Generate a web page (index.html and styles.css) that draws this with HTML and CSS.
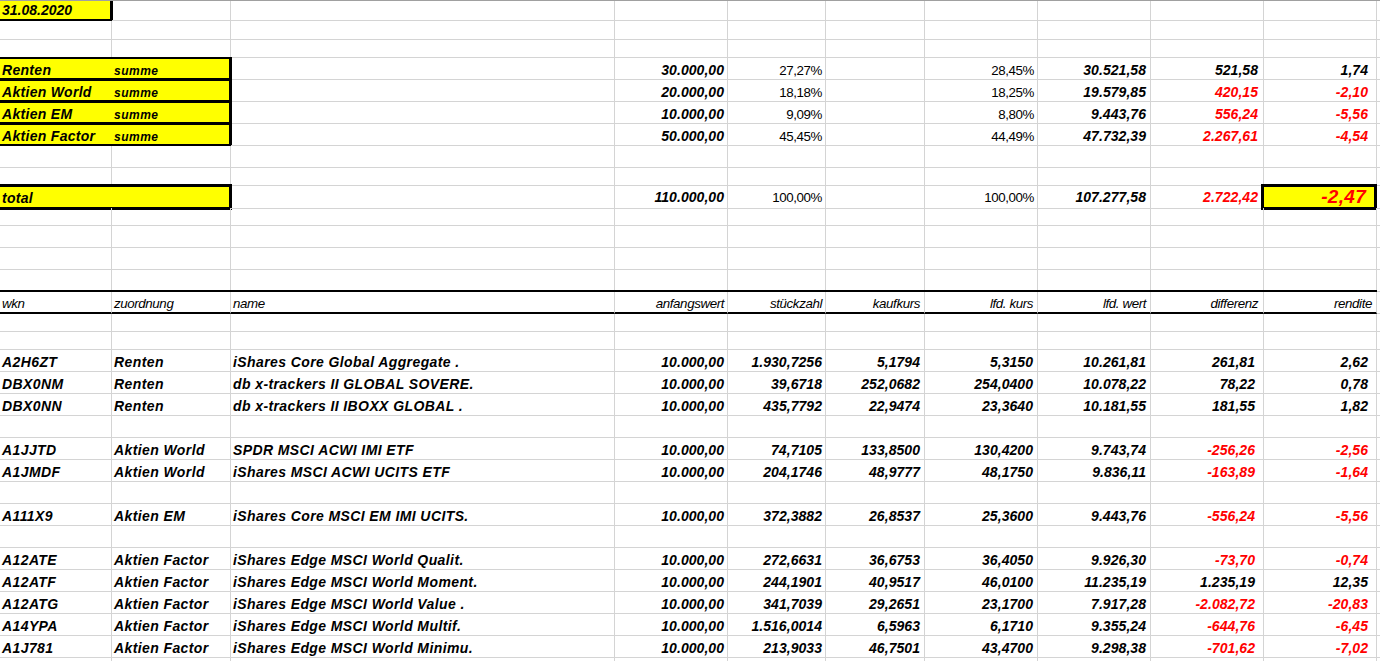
FILE: index.html
```html
<!DOCTYPE html>
<html lang="de">
<head>
<meta charset="utf-8">
<title>Depot 31.08.2020</title>
<link rel="stylesheet" href="styles.css">
</head>
<body>
<div class="sheet">
  <div class="row h20"><div class="date">31.08.2020</div><div></div><div></div><div></div><div></div><div></div><div></div><div></div><div></div><div></div><div></div></div>
  <div class="row h19"><div></div><div></div><div></div><div></div><div></div><div></div><div></div><div></div><div></div><div></div><div></div></div>
  <div class="row h18"><div></div><div></div><div></div><div></div><div></div><div></div><div></div><div></div><div></div><div></div><div></div></div>

  <div class="row sum"><div class="box"><p class="lbl"><span class="cat">Renten</span><span class="sm">summe</span></p></div><div></div><div class="b">30.000,00</div><div>27,27%</div><div></div><div>28,45%</div><div class="b">30.521,58</div><div class="b">521,58</div><div class="b">1,74</div><div></div></div>
  <div class="row sum"><div class="box"><p class="lbl"><span class="cat">Aktien World</span><span class="sm">summe</span></p></div><div></div><div class="b">20.000,00</div><div>18,18%</div><div></div><div>18,25%</div><div class="b">19.579,85</div><div class="b red">420,15</div><div class="b red">-2,10</div><div></div></div>
  <div class="row sum"><div class="box"><p class="lbl"><span class="cat">Aktien EM</span><span class="sm">summe</span></p></div><div></div><div class="b">10.000,00</div><div>9,09%</div><div></div><div>8,80%</div><div class="b">9.443,76</div><div class="b red">556,24</div><div class="b red">-5,56</div><div></div></div>
  <div class="row sum"><div class="box"><p class="lbl"><span class="cat">Aktien Factor</span><span class="sm">summe</span></p></div><div></div><div class="b">50.000,00</div><div>45,45%</div><div></div><div>44,49%</div><div class="b">47.732,39</div><div class="b red">2.267,61</div><div class="b red">-4,54</div><div></div></div>

  <div class="row"><div></div><div></div><div></div><div></div><div></div><div></div><div></div><div></div><div></div><div></div><div></div></div>
  <div class="row h18"><div></div><div></div><div></div><div></div><div></div><div></div><div></div><div></div><div></div><div></div><div></div></div>

  <div class="row sum tot"><div class="box"><p class="lbl"><span class="cat">total</span></p></div><div></div><div class="b">110.000,00</div><div>100,00%</div><div></div><div>100,00%</div><div class="b">107.277,58</div><div class="b red">2.722,42</div><div class="rbox">-2,47</div><div></div></div>

  <div class="row h18"><div></div><div></div><div></div><div></div><div></div><div></div><div></div><div></div><div></div><div></div><div></div></div>
  <div class="row"><div></div><div></div><div></div><div></div><div></div><div></div><div></div><div></div><div></div><div></div><div></div></div>
  <div class="row"><div></div><div></div><div></div><div></div><div></div><div></div><div></div><div></div><div></div><div></div><div></div></div>
  <div class="row"><div></div><div></div><div></div><div></div><div></div><div></div><div></div><div></div><div></div><div></div><div></div></div>

  <div class="row hdr"><div>wkn</div><div>zuordnung</div><div>name</div><div>anfangswert</div><div>stückzahl</div><div>kaufkurs</div><div>lfd. kurs</div><div>lfd. wert</div><div>differenz</div><div>rendite</div><div></div></div>

  <div class="row h18"><div></div><div></div><div></div><div></div><div></div><div></div><div></div><div></div><div></div><div></div><div></div></div>
  <div class="row h18"><div></div><div></div><div></div><div></div><div></div><div></div><div></div><div></div><div></div><div></div><div></div></div>

  <div class="row data"><div>A2H6ZT</div><div>Renten</div><div>iShares Core Global Aggregate .</div><div>10.000,00</div><div>1.930,7256</div><div>5,1794</div><div>5,3150</div><div>10.261,81</div><div>261,81</div><div>2,62</div><div></div></div>
  <div class="row data"><div>DBX0NM</div><div>Renten</div><div>db x-trackers II GLOBAL SOVERE.</div><div>10.000,00</div><div>39,6718</div><div>252,0682</div><div>254,0400</div><div>10.078,22</div><div>78,22</div><div>0,78</div><div></div></div>
  <div class="row data"><div>DBX0NN</div><div>Renten</div><div>db x-trackers II IBOXX GLOBAL .</div><div>10.000,00</div><div>435,7792</div><div>22,9474</div><div>23,3640</div><div>10.181,55</div><div>181,55</div><div>1,82</div><div></div></div>
  <div class="row"><div></div><div></div><div></div><div></div><div></div><div></div><div></div><div></div><div></div><div></div><div></div></div>
  <div class="row data"><div>A1JJTD</div><div>Aktien World</div><div>SPDR MSCI ACWI IMI ETF</div><div>10.000,00</div><div>74,7105</div><div>133,8500</div><div>130,4200</div><div>9.743,74</div><div class="red">-256,26</div><div class="red">-2,56</div><div></div></div>
  <div class="row data"><div>A1JMDF</div><div>Aktien World</div><div>iShares MSCI ACWI UCITS ETF</div><div>10.000,00</div><div>204,1746</div><div>48,9777</div><div>48,1750</div><div>9.836,11</div><div class="red">-163,89</div><div class="red">-1,64</div><div></div></div>
  <div class="row"><div></div><div></div><div></div><div></div><div></div><div></div><div></div><div></div><div></div><div></div><div></div></div>
  <div class="row data"><div>A111X9</div><div>Aktien EM</div><div>iShares Core MSCI EM IMI UCITS.</div><div>10.000,00</div><div>372,3882</div><div>26,8537</div><div>25,3600</div><div>9.443,76</div><div class="red">-556,24</div><div class="red">-5,56</div><div></div></div>
  <div class="row"><div></div><div></div><div></div><div></div><div></div><div></div><div></div><div></div><div></div><div></div><div></div></div>
  <div class="row data"><div>A12ATE</div><div>Aktien Factor</div><div>iShares Edge MSCI World Qualit.</div><div>10.000,00</div><div>272,6631</div><div>36,6753</div><div>36,4050</div><div>9.926,30</div><div class="red">-73,70</div><div class="red">-0,74</div><div></div></div>
  <div class="row data"><div>A12ATF</div><div>Aktien Factor</div><div>iShares Edge MSCI World Moment.</div><div>10.000,00</div><div>244,1901</div><div>40,9517</div><div>46,0100</div><div>11.235,19</div><div>1.235,19</div><div>12,35</div><div></div></div>
  <div class="row data"><div>A12ATG</div><div>Aktien Factor</div><div>iShares Edge MSCI World Value .</div><div>10.000,00</div><div>341,7039</div><div>29,2651</div><div>23,1700</div><div>7.917,28</div><div class="red">-2.082,72</div><div class="red">-20,83</div><div></div></div>
  <div class="row data"><div>A14YPA</div><div>Aktien Factor</div><div>iShares Edge MSCI World Multif.</div><div>10.000,00</div><div>1.516,0014</div><div>6,5963</div><div>6,1710</div><div>9.355,24</div><div class="red">-644,76</div><div class="red">-6,45</div><div></div></div>
  <div class="row data"><div>A1J781</div><div>Aktien Factor</div><div>iShares Edge MSCI World Minimu.</div><div>10.000,00</div><div>213,9033</div><div>46,7501</div><div>43,4700</div><div>9.298,38</div><div class="red">-701,62</div><div class="red">-7,02</div><div></div></div>
  <div class="row"><div></div><div></div><div></div><div></div><div></div><div></div><div></div><div></div><div></div><div></div><div></div></div>
</div>
</body>
</html>
```

FILE: styles.css
```css
html, body {
  margin: 0;
  padding: 0;
  background: #ffffff;
  overflow: hidden;
}

.sheet {
  border-top: 1px solid #a0a0a0;
  font-family: "Liberation Sans", Arial, sans-serif;
  font-size: 13.33px;
  color: #000000;
  letter-spacing: -0.4px;
}

.row {
  display: grid;
  grid-template-columns: 112px 119px 384px 113px 98px 99px 113px 113px 113px 113px 1fr;
  height: 22px;
}

.h20 { height: 20px; }
.h19 { height: 19px; }
.h18 { height: 18px; }

.row > div {
  box-sizing: border-box;
  border-right: 1px solid #d4d4d4;
  border-bottom: 1px solid #d4d4d4;
  display: flex;
  align-items: flex-end;
  padding: 0 3px 0 2px;
  line-height: 15px;
  white-space: nowrap;
  min-width: 0;
}

.b {
  font-weight: bold;
  font-style: italic;
  font-size: 14px;
  letter-spacing: 0.05px;
}

.red { color: #ff0000; }

/* date cell */
.row > .date {
  background: #ffff00;
  font-weight: bold;
  font-style: italic;
  font-size: 14px;
  letter-spacing: 0;
  padding-bottom: 1px;
  border-right: 2px solid #000000;
  border-bottom: 2px solid #000000;
  box-shadow: 1px 0 0 #000000;
}

/* yellow summary boxes spanning columns A and B */
.row > .box {
  grid-column: span 2;
  padding: 0;
  background: #ffff00;
  border-top: 1px solid #000000;
  border-right: 2px solid #000000;
  border-bottom: 2px solid #000000;
  box-shadow: 0 -1px 0 #000000, 1px 0 0 #000000, 1px -1px 0 #000000;
}

.lbl {
  margin: 0;
  line-height: 15px;
  font-weight: bold;
  font-style: italic;
}

.lbl > .cat {
  display: inline-block;
  width: 112px;
  padding-left: 2px;
  font-size: 14px;
  letter-spacing: 0.3px;
}

.lbl > .sm {
  font-size: 12px;
  line-height: 14px;
  letter-spacing: 0.5px;
}

.sum > div { padding-bottom: 1px; }

.tot > div { padding-bottom: 3px; }

.row > .tot-x { padding-bottom: 1px; }

.tot > .box {
  padding-bottom: 1px;
  box-shadow: 0 -2px 0 #000000, 1px 0 0 #000000, 1px -2px 0 #000000, 0 1px 0 #000000, 1px 1px 0 #000000;
}

.row > .rbox {
  justify-content: flex-end;
  background: #ffff00;
  color: #ff0000;
  font-weight: bold;
  font-style: italic;
  font-size: 19px;
  letter-spacing: 0.3px;
  line-height: 20px;
  padding: 0 9px 0 0;
  border-top: 1px solid #000000;
  border-right: 3px solid #000000;
  border-bottom: 2px solid #000000;
  box-shadow: -3px 0 0 #000000, 0 -2px 0 #000000, -3px -2px 0 #000000, 0 1px 0 #000000, -3px 1px 0 #000000;
}

/* summary rows: right aligned numbers */
.sum > :nth-child(n+3):nth-child(-n+9) { justify-content: flex-end; }
.sum > :nth-child(7) { padding-right: 4px; }
.sum > :nth-child(8) { padding-right: 5px; }
.sum > :nth-child(9) { padding-right: 8px; }

/* header row */
.hdr > div {
  font-style: italic;
  padding-bottom: 1px;
}
.hdr > :nth-child(n+4):nth-child(-n+10) { justify-content: flex-end; }
.hdr > :nth-child(-n+10) {
  border-bottom: 2px solid #000000;
  box-shadow: 0 -2px 0 #000000;
}
.hdr > :nth-child(n+6):nth-child(-n+8) { padding-right: 4px; }
.hdr > :nth-child(9) { padding-right: 5px; }
.hdr > :nth-child(10) { padding-right: 4px; }

/* data rows */
.data > div {
  font-weight: bold;
  font-style: italic;
  font-size: 14px;
  letter-spacing: 0.05px;
  padding-bottom: 1px;
}
.data > :nth-child(-n+3) { letter-spacing: 0.4px; }
.data > :nth-child(n+4):nth-child(-n+10) { justify-content: flex-end; }
.data > :nth-child(6),
.data > :nth-child(7),
.data > :nth-child(8) { padding-right: 4px; }
.data > :nth-child(9) { padding-right: 8px; }
.data > :nth-child(10) { padding-right: 8px; }
```
